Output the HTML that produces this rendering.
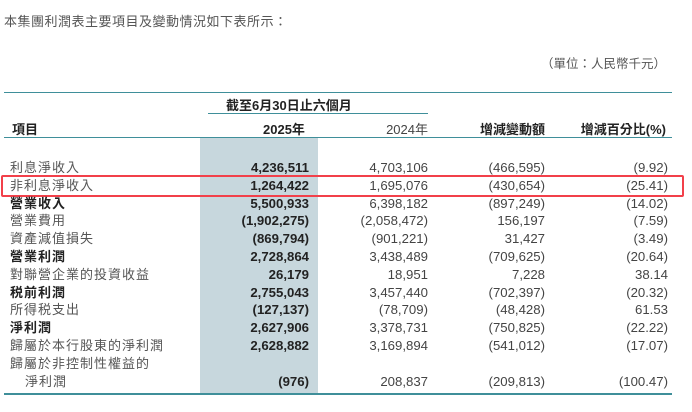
<!DOCTYPE html>
<html><head><meta charset="utf-8"><style>
body{margin:0;width:692px;height:412px;background:#fff;position:relative;overflow:hidden;font-family:"Liberation Sans","Noto Sans CJK TC",sans-serif;color:#333;font-size:13.2px}
.a{position:absolute;white-space:nowrap}
.line{position:absolute;background:#3f8f9a}
.r{position:absolute;left:0;width:692px;height:17.8px;line-height:17.8px}
.r span{position:absolute;top:0}
.l{left:10px;letter-spacing:1px;color:#555;font-size:13px}
.c1{right:383px;font-weight:bold;color:#222}
.c2{right:264px;color:#444}
.c3{right:147px;color:#444}
.c4{right:24px;color:#444}
.b .l{font-weight:bold;color:#222}
</style></head><body>
<div class="a" style="left:4px;top:11px;font-size:13px;color:#555;letter-spacing:.5px">本集團利潤表主要項目及變動情況如下表所示：</div>
<div class="a" style="right:26px;top:53px;font-size:12.5px;color:#555">（單位：人民幣千元）</div>
<div class="line" style="left:4px;top:92px;width:668px;height:1px"></div>
<div class="a" style="left:226px;top:95px;font-weight:bold;color:#222;font-size:13px">截至6月30日止六個月</div>
<div class="line" style="left:208px;top:113px;width:220px;height:1px"></div>
<div class="a" style="left:12px;top:119px;font-weight:bold;color:#222;font-size:13px">項目</div>
<div class="a" style="left:263px;top:119px;font-weight:bold;color:#222;font-size:13px">2025年</div>
<div class="a" style="right:264px;top:119px;color:#444;font-size:13px">2024年</div>
<div class="a" style="right:147px;top:119px;font-weight:bold;color:#222;font-size:13px">增減變動額</div>
<div class="a" style="right:26px;top:119px;font-weight:bold;color:#222;font-size:13px">增減百分比(%)</div>
<div class="line" style="left:4px;top:137px;width:668px;height:1px"></div>
<div style="position:absolute;left:200px;top:138px;width:118px;height:256px;background:#c7d7dd"></div>
<div class="line" style="left:4px;top:393px;width:668px;height:2px"></div>
<div style="position:absolute;left:1px;top:175px;width:679px;height:18px;border:2.5px solid #f2404a;border-radius:2px"></div>
<div class="r" style="top:159px"><span class="l">利息淨收入</span><span class="c1">4,236,511</span><span class="c2">4,703,106</span><span class="c3">(466,595)</span><span class="c4">(9.92)</span></div>
<div class="r" style="top:176.8px"><span class="l">非利息淨收入</span><span class="c1">1,264,422</span><span class="c2">1,695,076</span><span class="c3">(430,654)</span><span class="c4">(25.41)</span></div>
<div class="r b" style="top:194.6px"><span class="l">營業收入</span><span class="c1">5,500,933</span><span class="c2">6,398,182</span><span class="c3">(897,249)</span><span class="c4">(14.02)</span></div>
<div class="r" style="top:212.4px"><span class="l">營業費用</span><span class="c1">(1,902,275)</span><span class="c2">(2,058,472)</span><span class="c3">156,197</span><span class="c4">(7.59)</span></div>
<div class="r" style="top:230.2px"><span class="l">資產減值損失</span><span class="c1">(869,794)</span><span class="c2">(901,221)</span><span class="c3">31,427</span><span class="c4">(3.49)</span></div>
<div class="r b" style="top:248px"><span class="l">營業利潤</span><span class="c1">2,728,864</span><span class="c2">3,438,489</span><span class="c3">(709,625)</span><span class="c4">(20.64)</span></div>
<div class="r" style="top:265.8px"><span class="l">對聯營企業的投資收益</span><span class="c1">26,179</span><span class="c2">18,951</span><span class="c3">7,228</span><span class="c4">38.14</span></div>
<div class="r b" style="top:283.6px"><span class="l">税前利潤</span><span class="c1">2,755,043</span><span class="c2">3,457,440</span><span class="c3">(702,397)</span><span class="c4">(20.32)</span></div>
<div class="r" style="top:301.4px"><span class="l">所得税支出</span><span class="c1">(127,137)</span><span class="c2">(78,709)</span><span class="c3">(48,428)</span><span class="c4">61.53</span></div>
<div class="r b" style="top:319.2px"><span class="l">淨利潤</span><span class="c1">2,627,906</span><span class="c2">3,378,731</span><span class="c3">(750,825)</span><span class="c4">(22.22)</span></div>
<div class="r" style="top:337px"><span class="l">歸屬於本行股東的淨利潤</span><span class="c1">2,628,882</span><span class="c2">3,169,894</span><span class="c3">(541,012)</span><span class="c4">(17.07)</span></div>
<div class="r" style="top:354.8px"><span class="l">歸屬於非控制性權益的</span></div>
<div class="r" style="top:372.6px"><span class="l" style="left:25px">淨利潤</span><span class="c1">(976)</span><span class="c2">208,837</span><span class="c3">(209,813)</span><span class="c4">(100.47)</span></div>
</body></html>
